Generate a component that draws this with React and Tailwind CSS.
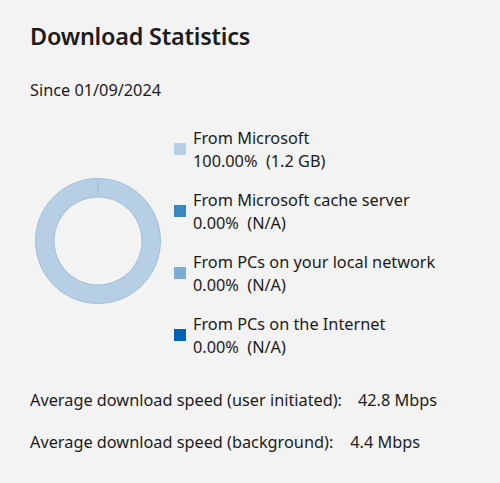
import React from "react";

const items = [
  { label: "From Microsoft", value: "100.00%\u00a0\u00a0(1.2 GB)", color: "bg-[#b7cfe4]" },
  { label: "From Microsoft cache server", value: "0.00%\u00a0\u00a0(N/A)", color: "bg-[#3b88c1]" },
  { label: "From PCs on your local network", value: "0.00%\u00a0\u00a0(N/A)", color: "bg-[#7aacd5]" },
  { label: "From PCs on the Internet", value: "0.00%\u00a0\u00a0(N/A)", color: "bg-[#0063b1]" },
];

function Donut() {
  return (
    <svg width="128" height="128" viewBox="0 0 128 128">
      <path
        d="M64 1.5 A62.5 62.5 0 1 1 63.99 1.5 Z M64 20 A44 44 0 1 0 64.01 20 Z"
        fill="#b7cfe4"
        fillRule="evenodd"
        stroke="#9dbfdc"
        strokeWidth="1"
      />
      <line x1="64" y1="1.5" x2="64" y2="20" stroke="#9dbfdc" strokeWidth="1" />
    </svg>
  );
}

export default function App() {
  return (
    <div
      className="w-[500px] h-[483px] bg-[#f3f3f3] text-[#1b1b1b] pl-[30px] pt-[20px] overflow-hidden"
      style={{ fontFamily: '"Noto Sans", "Open Sans", sans-serif' }}
    >
      <h1 className="text-[23.4px] font-semibold leading-[32px] tracking-[-0.2px]">Download Statistics</h1>
      <div className="mt-[27px] text-[16.3px] leading-[22px]">Since 01/09/2024</div>
      <div className="flex items-start mt-[26px]">
        <div className="ml-[4px] mt-[50px] w-[140px]">
          <Donut />
        </div>
        <div className="flex flex-col gap-[16px]">
          {items.map((it) => (
            <div key={it.label} className="flex items-center">
              <div className={`w-[12px] h-[12px] -mt-[2px] ${it.color}`} />
              <div className="ml-[7px] text-[16.3px] leading-[23px]">
                <div>{it.label}</div>
                <div>{it.value}</div>
              </div>
            </div>
          ))}
        </div>
      </div>
      <div className="mt-[30px] text-[16.3px] leading-[22px] flex flex-col gap-[20px]">
        <div>
          Average download speed (user initiated):<span className="ml-[16px]">42.8 Mbps</span>
        </div>
        <div>
          Average download speed (background):<span className="ml-[17px]">4.4 Mbps</span>
        </div>
      </div>
    </div>
  );
}
